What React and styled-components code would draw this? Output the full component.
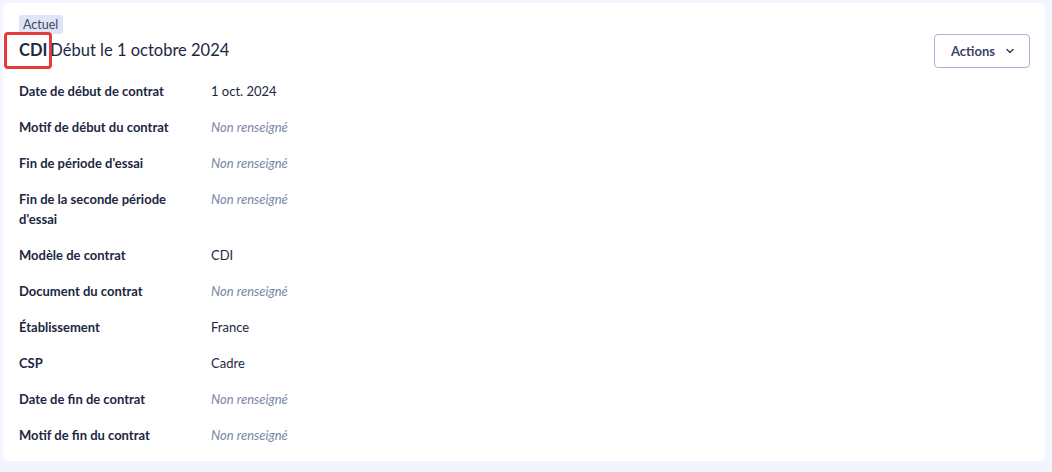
import styled, { createGlobalStyle } from "styled-components";

const GlobalStyle = createGlobalStyle`
    body {
        margin: 0;
        background: #f2f5fd;
        font-family: "Source Sans Pro", Lato, "Liberation Sans", sans-serif;
        color: #1d2742;
    }
`;

const Page = styled.div`
    width: 1052px;
    height: 472px;
    padding: 3px 7px 11px 3px;
    box-sizing: border-box;
`;

const Card = styled.div`
    background: #ffffff;
    border-radius: 5px;
    height: 100%;
    box-sizing: border-box;
    padding: 10px 15px 0 16px;
`;

const Header = styled.div`
    display: flex;
    justify-content: space-between;
    align-items: flex-start;
`;

const Badge = styled.span`
    display: inline-block;
    background: #dfe5f4;
    color: #3a4566;
    font-size: 12.5px;
    line-height: 19px;
    padding: 0 5px 0 4px;
    border-radius: 3px;
`;

const Title = styled.h1`
    margin: 2px 0 0 0;
    font-size: 16.5px;
    font-weight: 400;
    line-height: 28px;
    display: flex;
    align-items: center;
    gap: 3px;
`;

const Type = styled.span`
    position: relative;
    font-weight: 700;

    &::after {
        content: "";
        position: absolute;
        left: -15px;
        right: -5px;
        top: -4px;
        bottom: -5px;
        border: 3px solid #e33a3a;
        border-radius: 4px;
    }
`;

const ActionsButton = styled.button`
    margin-top: 21px;
    width: 96px;
    height: 34px;
    border: 1px solid #a9b4d3;
    border-radius: 4px;
    background: #ffffff;
    color: #3a4566;
    font-family: inherit;
    font-size: 13px;
    font-weight: 700;
    display: flex;
    align-items: center;
    justify-content: center;
    gap: 10px;
    padding: 0 0 0 2px;
`;

const List = styled.dl`
    margin: 13px 0 0 0;
    display: grid;
    grid-template-columns: 192px 1fr;
    row-gap: 16px;
    font-size: 13px;
    line-height: 20px;
`;

const Label = styled.dt`
    font-weight: 700;
    width: 165px;
    color: #1d2742;
`;

const Value = styled.dd`
    margin: 0;
    color: ${p => (p.$empty ? "#7a86a8" : "#1d2742")};
    font-style: ${p => (p.$empty ? "italic" : "normal")};
`;

const rows = [
    ["Date de début de contrat", "1 oct. 2024"],
    ["Motif de début du contrat", null],
    ["Fin de période d'essai", null],
    ["Fin de la seconde période d'essai", null],
    ["Modèle de contrat", "CDI"],
    ["Document du contrat", null],
    ["Établissement", "France"],
    ["CSP", "Cadre"],
    ["Date de fin de contrat", null],
    ["Motif de fin du contrat", null],
];

const Chevron = () => (
    <svg width="10" height="10" viewBox="0 0 10 10" fill="none">
        <path d="M2 3.5 L5 6.5 L8 3.5" stroke="#3a4566" strokeWidth="1.6" strokeLinecap="round" strokeLinejoin="round" />
    </svg>
);

const App = () => {
    return (
        <Page>
            <GlobalStyle />
            <Card>
                <Header>
                    <div>
                        <Badge>Actuel</Badge>
                        <Title>
                            <Type>CDI</Type>
                            <span>Début le 1 octobre 2024</span>
                        </Title>
                    </div>
                    <ActionsButton>
                        Actions
                        <Chevron />
                    </ActionsButton>
                </Header>
                <List>
                    {rows.map(([label, value]) => (
                        <>
                            <Label key={label}>{label}</Label>
                            <Value key={label + "v"} $empty={!value}>
                                {value || "Non renseigné"}
                            </Value>
                        </>
                    ))}
                </List>
            </Card>
        </Page>
    );
};

export default App;
